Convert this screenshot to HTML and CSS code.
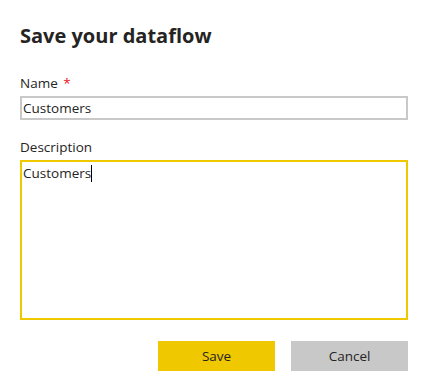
FILE: index.html
```html
<!DOCTYPE html>
<html lang="en">
<head>
<meta charset="utf-8">
<title>Save your dataflow</title>
<link rel="stylesheet" href="styles.css">
</head>
<body>
<div class="dialog">
  <h1 class="title">Save your dataflow</h1>
  <label class="label label-name">Name <span class="required">*</span></label>
  <div class="input">Customers</div>
  <label class="label label-desc">Description</label>
  <div class="textarea"><span class="text">Customers</span><span class="caret"></span></div>
  <div class="actions">
    <button class="btn btn-primary">Save</button>
    <button class="btn btn-secondary">Cancel</button>
  </div>
</div>
</body>
</html>
```
FILE: styles.css
```css
html, body {
  margin: 0;
  padding: 0;
  background: #ffffff;
}
body {
  font-family: "Open Sans", "Noto Sans", sans-serif;
  color: #252423;
}
.dialog {
  width: 388px;
  padding: 0 17px 0 20px;
  display: flex;
  flex-direction: column;
}
.title {
  margin: 22px 0 0;
  font-size: 20px;
  line-height: 28px;
  font-weight: 700;
  color: #252423;
}
.label {
  display: block;
  font-size: 13.5px;
  line-height: 20px;
  margin-bottom: 3px;
}
.label-name {
  margin-top: 23px;
}
.label-desc {
  margin-top: 17px;
}
.required {
  color: #e81123;
  margin-left: 2px;
}
.input {
  box-sizing: border-box;
  height: 24px;
  border: 2px solid #c8c8c8;
  padding: 0 1px;
  font-size: 13.5px;
  line-height: 20px;
}
.textarea {
  box-sizing: border-box;
  height: 160px;
  border: 2px solid #efc800;
  padding: 1px 1px;
  font-size: 13.5px;
  line-height: 20px;
  display: flex;
  align-items: flex-start;
}
.caret {
  display: inline-block;
  width: 1px;
  height: 17px;
  margin-top: 2px;
  background: #000;
}
.actions {
  display: flex;
  justify-content: flex-end;
  gap: 16px;
  margin-top: 21px;
}
.btn {
  width: 117px;
  height: 30px;
  border: none;
  font-family: inherit;
  font-size: 13.5px;
  color: #252423;
  padding: 0;
}
.btn-primary {
  background: #efc800;
}
.btn-secondary {
  background: #c8c8c8;
}
```
